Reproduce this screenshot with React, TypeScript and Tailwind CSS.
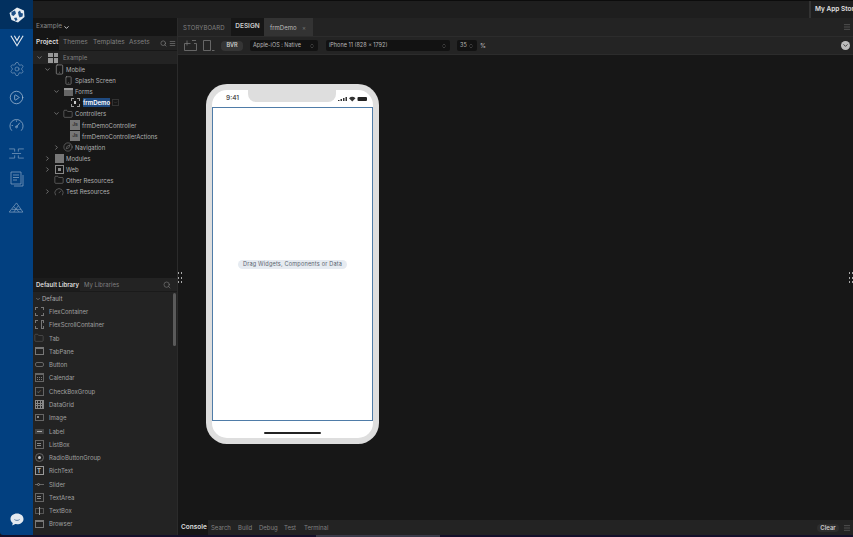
import type { ReactNode } from "react";
import { ChevronDown, ChevronRight, ChevronsUpDown, Gauge, Search, Menu, Settings, CirclePlay, Folder, Smartphone, Compass } from "lucide-react";

type TreeRow = { label: string; indent: string; arrow?: "down" | "right"; icon: ReactNode; selected?: boolean };

const jsIcon = (
  <span className="w-[10px] h-[10px] bg-[#777] text-[#333] text-[5px] font-bold flex items-center justify-center">Js</span>
);

const tree: TreeRow[] = [
  { label: "Mobile", indent: "pl-[10px]", arrow: "down", icon: <Smartphone size={11} strokeWidth={1.5} className="text-[#999]" /> },
  { label: "Splash Screen", indent: "pl-[19px]", icon: <Smartphone size={9} strokeWidth={1.5} className="text-[#999]" /> },
  {
    label: "Forms",
    indent: "pl-[19px]",
    arrow: "down",
    icon: <span className="w-[9px] h-[8px] bg-[#666] border-t-2 border-[#999] block" />,
  },
  {
    label: "frmDemo",
    indent: "pl-[26px]",
    icon: (
      <span className="w-[9px] h-[9px] border border-dashed border-[#999] flex items-center justify-center">
        <span className="w-[2px] h-[3px] bg-[#ccc] block" />
      </span>
    ),
    selected: true,
  },
  { label: "Controllers", indent: "pl-[19px]", arrow: "down", icon: <Folder size={10} strokeWidth={1} className="text-[#aaa]" /> },
  { label: "frmDemoController", indent: "pl-[26px]", icon: jsIcon },
  { label: "frmDemoControllerActions", indent: "pl-[26px]", icon: jsIcon },
  { label: "Navigation", indent: "pl-[19px]", arrow: "right", icon: <Compass size={10} strokeWidth={1} className="text-[#aaa]" /> },
  { label: "Modules", indent: "pl-[10px]", arrow: "right", icon: <span className="w-[9px] h-[9px] bg-[#777] block" /> },
  {
    label: "Web",
    indent: "pl-[10px]",
    arrow: "right",
    icon: (
      <span className="w-[9px] h-[9px] border border-[#888] flex items-center justify-center">
        <span className="w-[3px] h-[3px] bg-[#888] block" />
      </span>
    ),
  },
  { label: "Other Resources", indent: "pl-[10px]", icon: <Folder size={10} strokeWidth={1} className="text-[#aaa]" /> },
  { label: "Test Resources", indent: "pl-[10px]", arrow: "right", icon: <Gauge size={10} strokeWidth={1} className="text-[#aaa]" /> },
];

const widgets = [
  "FlexContainer", "FlexScrollContainer", "Tab", "TabPane", "Button", "Calendar", "CheckBoxGroup", "DataGrid",
  "Image", "Label", "ListBox", "RadioButtonGroup", "RichText", "Slider", "TextArea", "TextBox", "Browser",
];

function WidgetIcon({ name }: { name: string }) {
  const box = "w-[9px] h-[9px] border border-[#666] flex items-center justify-center";
  switch (name) {
    case "FlexContainer":
      return <span className="w-[9px] h-[9px] border border-dashed border-[#777] block" />;
    case "FlexScrollContainer":
      return (
        <span className="w-[9px] h-[9px] border border-dashed border-[#777] flex justify-end">
          <span className="w-px h-full bg-[#777] mr-[1px]" />
        </span>
      );
    case "Tab":
      return <Folder size={10} strokeWidth={1} className="text-[#777]" />;
    case "TabPane":
    case "Browser":
      return <span className="w-[9px] h-[8px] border border-t-2 border-[#777] block" />;
    case "Button":
      return <span className="w-[9px] h-[5px] rounded-[2px] border border-[#666] block" />;
    case "Calendar":
      return (
        <span className={`${box} border-t-2`}>
          <span className="w-[5px] h-[3px] border-y border-dotted border-[#777] block" />
        </span>
      );
    case "CheckBoxGroup":
      return <span className={`${box} text-[6px] text-[#777]`}>✓</span>;
    case "DataGrid":
      return (
        <span className="w-[9px] h-[9px] border border-[#888] grid grid-cols-3 grid-rows-3 gap-px bg-[#888]">
          {Array.from({ length: 9 }).map((_, i) => (
            <span key={i} className="bg-[#262626]" />
          ))}
        </span>
      );
    case "Image":
      return (
        <span className="w-[9px] h-[7px] border border-[#666] flex items-start p-px">
          <span className="w-[2px] h-[2px] bg-[#888] block" />
        </span>
      );
    case "Label":
      return (
        <span className="w-[9px] h-[5px] bg-[#444] flex items-center justify-center">
          <span className="w-[5px] h-px bg-[#aaa] block" />
        </span>
      );
    case "ListBox":
    case "TextArea":
      return (
        <span className={`${box} flex-col gap-px items-start pl-px`}>
          <span className="w-[4px] h-px bg-[#888] block" />
          <span className="w-[4px] h-px bg-[#888] block" />
        </span>
      );
    case "RadioButtonGroup":
      return (
        <span className="w-[9px] h-[9px] rounded-full border border-[#666] flex items-center justify-center">
          <span className="w-[3px] h-[3px] rounded-full bg-[#ccc] block" />
        </span>
      );
    case "RichText":
      return <span className="w-[9px] h-[9px] border border-[#999] text-[6px] font-bold text-[#bbb] flex items-center justify-center">T</span>;
    case "Slider":
      return (
        <span className="w-[9px] h-[3px] flex items-center relative">
          <span className="w-full h-px bg-[#666] block" />
          <span className="absolute left-[2px] w-[3px] h-[3px] rounded-full border border-[#888] bg-[#262626]" />
        </span>
      );
    case "TextBox":
      return (
        <span className="w-[9px] h-[6px] border border-[#555] flex items-center justify-center">
          <span className="w-px h-[8px] bg-[#999] block" />
        </span>
      );
    default:
      return <span className={box} />;
  }
}

function Select({ label, className }: { label: string; className: string }) {
  return (
    <div className={`h-[11px] bg-[#121212] rounded-[2px] flex items-center justify-between pl-[3px] pr-[3px] text-[5.5px] text-[#b8b8b8] ${className}`}>
      <span>{label}</span>
      <ChevronsUpDown size={6} className="text-[#666]" />
    </div>
  );
}

function Handle({ className }: { className: string }) {
  return (
    <div className={`absolute w-[4px] h-[11px] flex flex-col justify-between ${className}`}>
      <span className="h-[2px] border-x border-[#aaa] block" />
      <span className="h-[2px] border-x border-[#aaa] block" />
      <span className="h-[2px] border-x border-[#aaa] block" />
    </div>
  );
}

export default function App() {
  return (
    <div className="w-[853px] h-[537px] flex flex-col overflow-hidden bg-[#181818] font-['Inter','Liberation_Sans',sans-serif]">
      <div className="flex-1 min-h-0 flex">
        {/* left rail */}
        <div className="w-[33px] shrink-0 bg-[#024080] flex flex-col items-center rounded-bl-[3px]">
          <div className="w-full h-[29px] bg-[#02305f] flex items-center justify-center">
            <svg viewBox="0 0 16 16" className="w-[16px] h-[16px]">
              <path d="M8 .5 15 3.5 15.5 10 9 15.5 2.5 13 .5 6z" fill="#e8edf2" />
              <path d="M2.5 5 6 3.5 7 6.5 4.5 9 2.5 8zM9 5l2-1.5 1 2.5 2 .5-.5 3-3 1-1-2.5zM5 11l2.5-.5 1 2.5-2 1z" fill="#1d4f86" />
            </svg>
          </div>
          <svg viewBox="0 0 16 14" className="w-[14px] h-[13px] mt-[5px] text-[#e4e9ef]" fill="none" stroke="currentColor" strokeWidth="1.3">
            <path d="M1 1.5 8 13 15 1.5M5 1.5 8 7l3-5.5" />
          </svg>
          <Settings size={16} strokeWidth={1} className="text-[#7f9dbd] mt-[14px]" />
          <CirclePlay size={15} strokeWidth={1.2} className="text-[#a8bdd4] mt-[13px]" />
          <svg viewBox="0 0 16 16" className="w-[15px] h-[15px] mt-[13px] text-[#8aa6c4]" fill="none" stroke="currentColor" strokeWidth=".9">
            <path d="M3 13.5a7 7 0 1 1 10 0M8 9.5l3.5-4.5M2.8 8h1.4M8 2.6V4" />
            <circle cx="8" cy="9.5" r="1" />
          </svg>
          <svg viewBox="0 0 16 12" className="w-[15px] h-[11px] mt-[15px] text-[#7f9dbd]" fill="none" stroke="currentColor" strokeWidth=".8">
            <path d="M0 1h6v3M16 1h-6v3M0 11h6V8M16 11h-6V8M3 6h10" />
          </svg>
          <svg viewBox="0 0 14 16" className="w-[14px] h-[16px] mt-[12px] text-[#7f9dbd]" fill="none" stroke="currentColor" strokeWidth=".8">
            <path d="M1 1h10v12H1zM3 4h6M3 6.5h6M3 9h4M13 4v11H4" />
          </svg>
          <svg viewBox="0 0 16 12" className="w-[15px] h-[11px] mt-[15px] text-[#7f9dbd]" fill="none" stroke="currentColor" strokeWidth=".8">
            <path d="M0 11 8 1l7 10zM3 8h10M5 5l6 6M10 4 5 11" />
          </svg>
          <div className="flex-1" />
          <svg viewBox="0 0 16 15" className="w-[14px] h-[13px] mb-[9px]">
            <path d="M8 .5c4.2 0 7.5 2.7 7.5 6.3S12.200 13 8 13c-.7 0-1.300-.1-2-.2L2.500 14.500l.6-3C1.500 10.300.5 8.700.5 6.800.5 3.200 3.800.5 8 .5z" fill="#e3e9f0" />
            <path d="M5 7.500c1.500 1.400 4.500 1.400 6 0" fill="none" stroke="#4b7199" strokeWidth="1" />
          </svg>
        </div>

        {/* main column */}
        <div className="flex-1 min-w-0 flex flex-col">
          <div className="h-[18px] shrink-0 bg-[#1e1e1e] border-t border-[#0c0c0c] flex justify-end">
            <div className="w-[44px] border-l-2 border-[#333] pl-[4px] text-[6.5px] leading-[17px] font-semibold text-[#e0e0e0] whitespace-nowrap overflow-hidden">
              My App Store
            </div>
          </div>

          <div className="flex-1 min-h-0 flex relative">
            {/* side panel */}
            <div className="w-[145px] shrink-0 flex flex-col border-r border-[#2b2b2b]">
              <div className="h-[18px] bg-[#151515] flex items-center pl-[3px] text-[6.5px] text-[#888]">
                Example
                <ChevronDown size={7} strokeWidth={3} className="ml-[1px] text-[#ddd]" />
              </div>
              <div className="h-[14px] bg-[#222] flex items-center text-[6.5px] text-[#808080]">
                <span className="bg-[#151515] text-[#ddd] font-semibold h-full pl-[3px] flex items-center w-[26px] shrink-0">Project</span>
                <span className="w-[30px] pl-[4px] shrink-0">Themes</span>
                <span className="w-[36px] pl-[4px] shrink-0">Templates</span>
                <span className="w-[29px] pl-[4px] shrink-0">Assets</span>
                <Search size={7} className="ml-[6px] text-[#888]" />
                <Menu size={7} className="ml-[2px] text-[#888]" />
              </div>
              <div className="h-[228px] bg-[#171717] pt-[1px] flex flex-col">
                <div className="h-[13px] bg-[#232323] flex items-center text-[6px] text-[#808080] pl-[3px]">
                  <ChevronDown size={7} className="text-[#aaa]" />
                  <span className="grid grid-cols-2 gap-px w-[10px] h-[10px] ml-[5px]">
                    <span className="bg-[#999]" />
                    <span className="bg-[#999]" />
                    <span className="bg-[#999]" />
                    <span className="bg-[#999]" />
                  </span>
                  <span className="ml-[5px]">Example</span>
                </div>
                {tree.map((r) => (
                  <div key={r.label} className={`h-[11.1px] flex items-center text-[6px] text-[#b0b0b0] whitespace-nowrap ${r.indent}`}>
                    <span className="w-[9px] flex justify-center shrink-0">
                      {r.arrow === "down" && <ChevronDown size={7} className="text-[#aaa]" />}
                      {r.arrow === "right" && <ChevronRight size={7} className="text-[#aaa]" />}
                    </span>
                    <span className="w-[14px] flex justify-center shrink-0">{r.icon}</span>
                    <span className={r.selected ? "ml-[1px] bg-[#1f4a80] text-white font-semibold" : ""}>{r.label}</span>
                    {r.selected && (
                      <span className="ml-[2px] w-[7px] h-[7px] border border-[#333] flex items-center justify-center">
                        <ChevronDown size={5} className="text-[#555]" />
                      </span>
                    )}
                  </div>
                ))}
              </div>

              {/* library */}
              <div className="flex-1 min-h-0 bg-[#232323] flex flex-col">
                <div className="h-[14px] shrink-0 flex items-center text-[6.5px] border-b border-[#1a1a1a] whitespace-nowrap">
                  <span className="text-[#ddd] font-semibold pl-[3px] w-[47px] bg-[#1c1c1c] h-full flex items-center shrink-0 text-[6px]">Default Library</span>
                  <span className="text-[#808080] pl-[4px] text-[6px]">My Libraries</span>
                  <Search size={8} className="ml-auto mr-[6px] text-[#777]" />
                </div>
                <div className="flex-1 min-h-0 relative overflow-hidden">
                  <div className="h-[13px] flex items-center pl-[2px] text-[6px] text-[#aaa]">
                    <ChevronDown size={6} />
                    <span className="ml-[1px]">Default</span>
                  </div>
                  {widgets.map((w) => (
                    <div key={w} className="h-[13.28px] flex items-center text-[6px] text-[#a0a0a0]">
                      <span className="w-[12px] flex justify-center shrink-0">
                        <WidgetIcon name={w} />
                      </span>
                      <span className="ml-[4px]">{w}</span>
                    </div>
                  ))}
                  <div className="absolute top-px right-[1px] w-[3px] h-[53px] bg-[#5a5a5a] rounded-sm" />
                </div>
              </div>
            </div>

            {/* editor */}
            <div className="flex-1 min-w-0 flex flex-col">
              <div className="h-[18px] shrink-0 bg-[#232323] flex items-center text-[6.5px]">
                <span className="w-[53px] h-full flex items-center pl-[5px] text-[#808080] text-[6px] tracking-[.02em]">STORYBOARD</span>
                <span className="w-[33px] h-full bg-[#161616] flex items-center justify-center text-[#ccc] font-semibold">DESIGN</span>
                <span className="w-[49px] h-full bg-[#333] flex items-center pl-[6px] text-[#bbb] text-[6px] relative">
                  frmDemo
                  <span className="absolute right-[7px] text-[#777]">×</span>
                </span>
                <Menu size={8} className="ml-auto mr-[2px] text-[#666]" />
              </div>
              <div className="h-[19px] shrink-0 bg-[#242424] border-y border-[#2c2c2c] flex items-center">
                <svg viewBox="0 0 13 11" className="w-[13px] h-[11px] ml-[6px] text-[#777]" fill="none" stroke="currentColor" strokeWidth=".8">
                  <path d="M.5 3.500h6M10 3.500h2.500v7H.5v-7M3 .5v5M.5 3M8 .5h4" />
                </svg>
                <svg viewBox="0 0 12 11" className="w-[12px] h-[11px] ml-[6px] text-[#777]" fill="none" stroke="currentColor" strokeWidth=".8">
                  <path d="M.5.5h7v10h-7zM9 10.500h2.500" />
                </svg>
                <span className="ml-[6px] w-[22px] h-[10px] bg-[#353535] rounded-sm text-[5.5px] font-semibold text-[#ccc] flex items-center justify-center">BVR</span>
                <Select label="Apple-iOS : Native" className="ml-[7px] w-[68px]" />
                <Select label="iPhone 11 (828 x 1792)" className="ml-[8px] w-[124px]" />
                <Select label="35" className="ml-[7px] w-[20px]" />
                <span className="ml-[3px] text-[6px] text-[#bbb]">%</span>
                <span className="ml-auto mr-[3px] w-[9px] h-[9px] rounded-full bg-[#bbb] flex items-center justify-center">
                  <ChevronDown size={7} strokeWidth={3} className="text-[#333]" />
                </span>
              </div>

              {/* canvas */}
              <div className="flex-1 min-h-0 bg-[#171717] pl-[28px] pt-[29px]">
                <div className="w-[173px] h-[360px] rounded-[21px] bg-[#dedede] p-[6px]">
                  <div className="h-full rounded-[15px] bg-white flex flex-col">
                    <div className="h-[17px] shrink-0 relative flex items-center justify-between pl-[14px] pr-[6px] pt-[1px]">
                      <span className="text-[6.5px] font-semibold text-[#555]">9:41</span>
                      <svg viewBox="0 0 29 6" className="w-[29px] h-[6px]">
                        <path d="M0 5h1.500V4H0zM2.500 5H4V3H2.500zM5 5h1.500V2H5zM7.500 5H9V1H7.500z" fill="#333" />
                        <path d="M11 2.200a5 5 0 0 1 6.500 0L14.250 5.500z" fill="#333" />
                        <rect x="19.500" y="1" width="9.500" height="4" rx="1" fill="#222" />
                      </svg>
                      <div className="absolute left-[36px] top-0 w-[88px] h-[12px] bg-[#dedede] rounded-b-[8px]" />
                    </div>
                    <div className="h-[314px] shrink-0 border border-[#4f7ca8] pt-px flex items-center justify-center">
                      <span className="h-[9px] w-[109px] rounded-full bg-[#e6ebf1] text-[5.6px] text-[#5c6670] flex items-center justify-center tracking-[.03em] whitespace-nowrap">
                        Drag Widgets, Components or Data
                      </span>
                    </div>
                    <div className="flex-1 flex items-center justify-center pt-[7px]">
                      <span className="w-[57px] h-[2px] rounded-full bg-[#222] block" />
                    </div>
                  </div>
                </div>
              </div>

              {/* console tabs */}
              <div className="h-[15px] shrink-0 bg-[#232323] flex items-center text-[6px] text-[#808080]">
                <span className="w-[30px] h-full bg-[#161616] text-[#ddd] text-[6.5px] font-semibold flex items-center pl-[3px] shrink-0">Console</span>
                <span className="w-[26px] pl-[3px] shrink-0">Search</span>
                <span className="w-[21px] pl-[4px] shrink-0">Build</span>
                <span className="w-[26px] pl-[4px] shrink-0">Debug</span>
                <span className="w-[20px] pl-[3px] shrink-0">Test</span>
                <span className="pl-[3px]">Terminal</span>
                <span className="ml-auto w-[22px] h-[8px] rounded-sm bg-[#2d2d2d] text-[6px] font-semibold text-[#ccc] flex items-center justify-center">Clear</span>
                <Menu size={8} className="ml-[4px] mr-[2px] text-[#666]" />
              </div>
            </div>

            <Handle className="left-[145px] top-[254px]" />
            <Handle className="right-0 top-[254px]" />
          </div>
        </div>
      </div>
      <div className="h-[2px] shrink-0 bg-[#14102a] flex">
        <div className="ml-[316px] w-[124px] bg-[#3a3a4a]" />
      </div>
    </div>
  );
}
